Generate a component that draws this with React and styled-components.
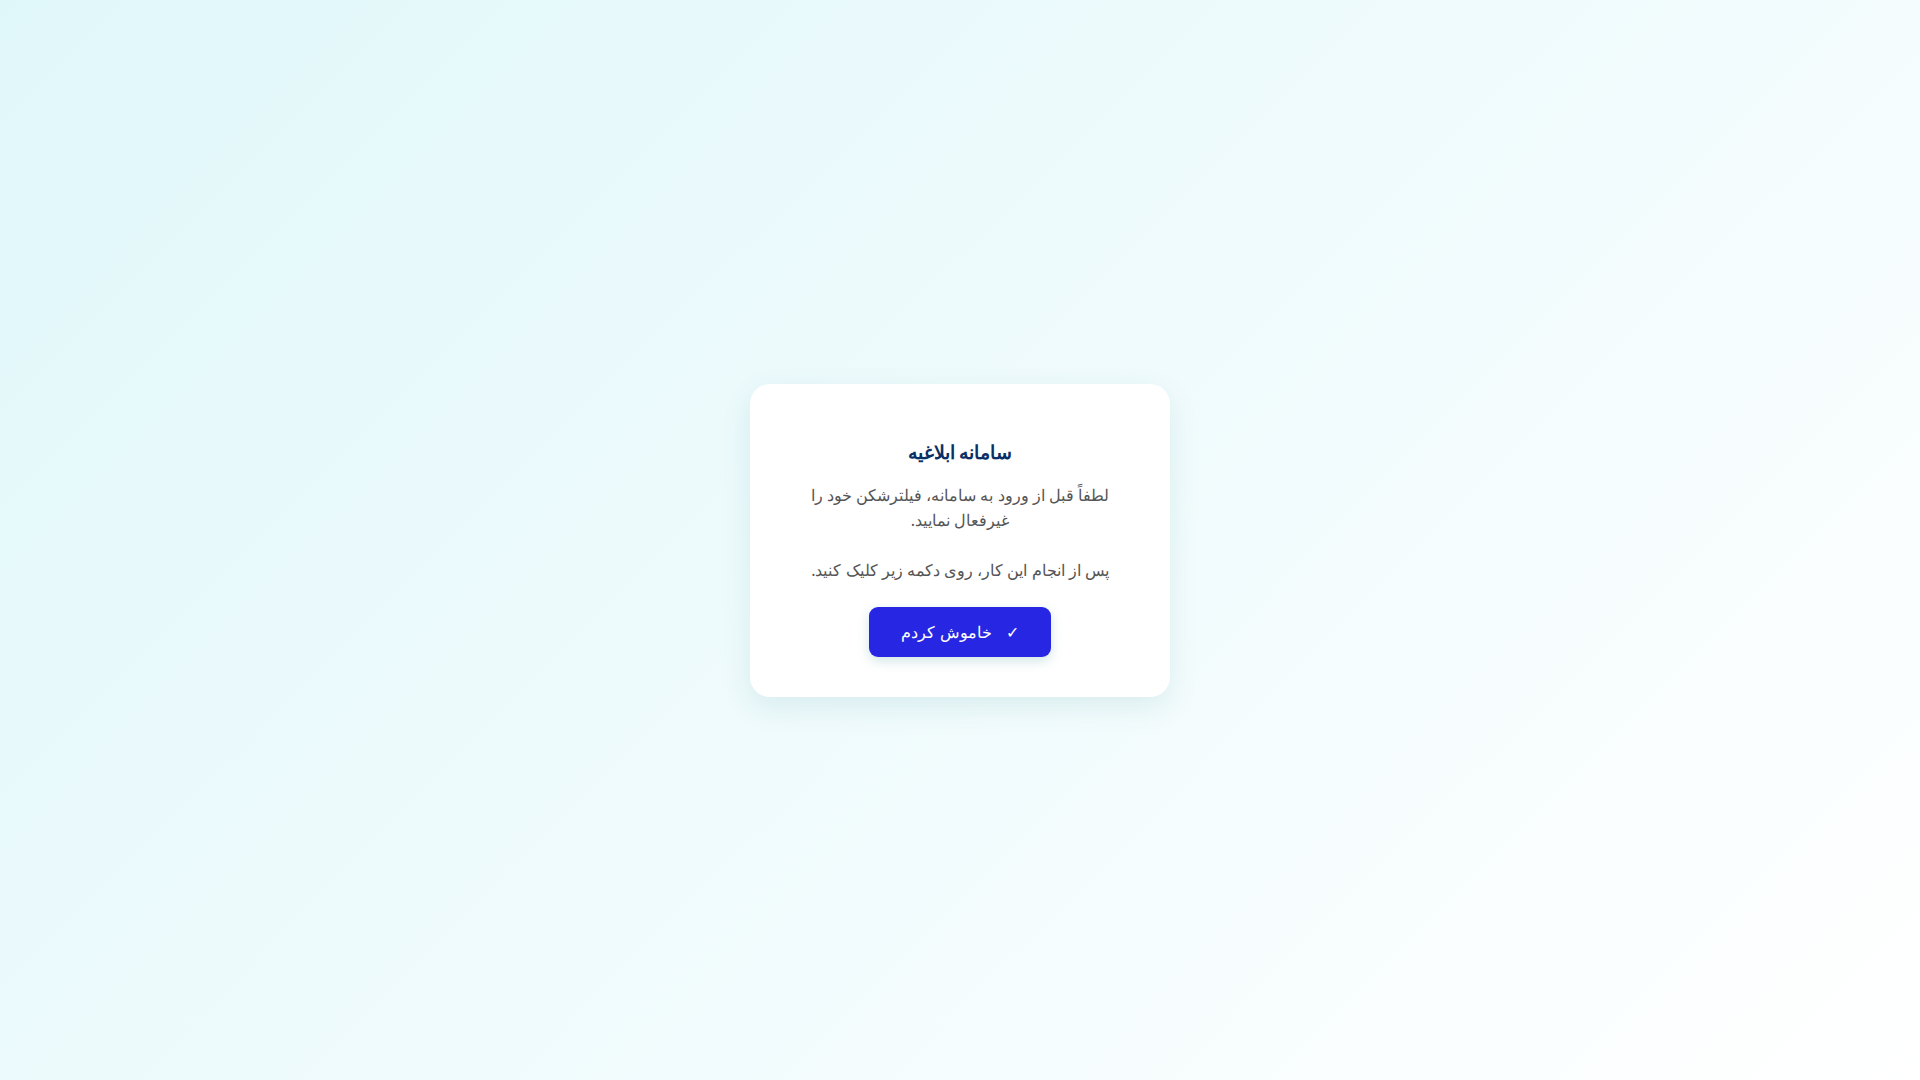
import styled, { createGlobalStyle } from "styled-components";

const GlobalStyle = createGlobalStyle`
  html, body {
    margin: 0;
    padding: 0;
  }
  body {
    font-family: "Noto Sans", sans-serif;
  }
  * {
    box-sizing: border-box;
  }
`;

const Page = styled.div`
  width: 100%;
  min-height: 100vh;
  display: flex;
  align-items: center;
  justify-content: center;
  background: linear-gradient(135deg, #e0f7fa 0%, #ffffff 100%);
  direction: rtl;
`;

const Card = styled.div`
  width: 420px;
  padding: 54px 40px 40px;
  background: #ffffff;
  border-radius: 20px;
  box-shadow: 0 10px 30px rgba(0, 110, 120, 0.1);
  text-align: center;
`;

const Title = styled.h2`
  margin: 0 0 17px;
  font-size: 19px;
  line-height: 28px;
  font-weight: bold;
  color: #0a3066;
`;

const Text = styled.p`
  margin: 0 0 ${(p) => p.$gap || 0}px;
  font-size: 16px;
  line-height: 25px;
  color: #555555;
`;

const Button = styled.button`
  width: 182px;
  height: 50px;
  margin-top: 24px;
  border: none;
  border-radius: 9px;
  background-color: #2727e3;
  color: #ffffff;
  font-family: inherit;
  font-size: 16px;
  display: inline-flex;
  align-items: center;
  justify-content: center;
  gap: 14px;
  box-shadow: 0 4px 12px rgba(0, 110, 120, 0.18);
  cursor: pointer;
`;

const App = () => {
  return (
    <>
      <GlobalStyle />
      <Page>
        <Card>
          <Title>سامانه ابلاغیه</Title>
          <Text $gap={25}>
            لطفاً قبل از ورود به سامانه، فیلترشکن خود را غیرفعال نمایید.
          </Text>
          <Text>پس از انجام این کار، روی دکمه زیر کلیک کنید.</Text>
          <Button>
            <span>✓</span>
            <span>خاموش کردم</span>
          </Button>
        </Card>
      </Page>
    </>
  );
};

export default App;
